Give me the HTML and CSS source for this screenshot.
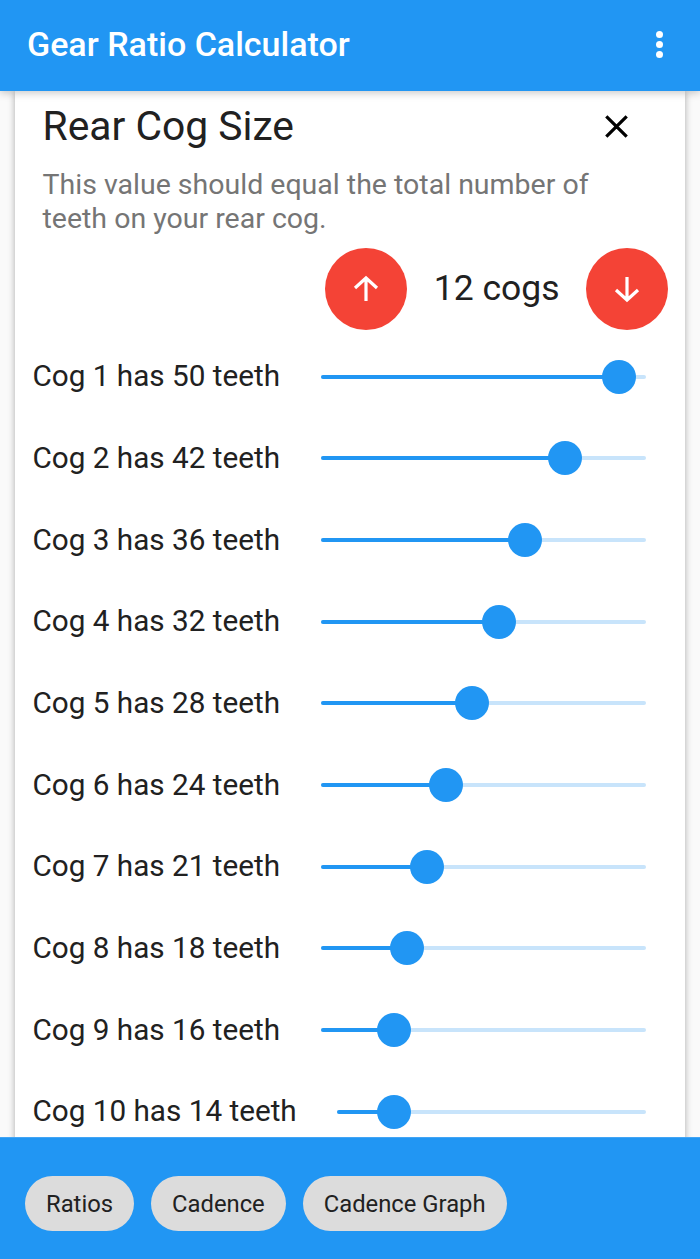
FILE: index.html
```html
<!DOCTYPE html>
<html lang="en">
<head>
    <meta charset="UTF-8">
    <title>Gear Ratio Calculator</title>
    <link rel="stylesheet" href="styles.css">
</head>
<body>
    <!-- App bar -->
    <header class="app-bar">
        <h1 class="app-title">Gear Ratio Calculator</h1>
        <div class="menu-dots"><span></span><span></span><span></span></div>
    </header>

    <main class="content">
        <section class="card">
            <div class="card-head">
                <h2 class="card-title">Rear Cog Size</h2>
                <svg class="close-icon" viewBox="0 0 24 24"><path d="M5 5 L19 19 M19 5 L5 19"/></svg>
            </div>
            <p class="card-desc">This value should equal the total number of teeth on your rear cog.</p>

            <div class="counter">
                <button class="round-btn">
                    <svg viewBox="0 0 28 28"><path d="M14 26 V3 M3 13 L14 3 L25 13"/></svg>
                </button>
                <span class="counter-value">12 cogs</span>
                <button class="round-btn">
                    <svg viewBox="0 0 28 28"><path d="M14 2 V25 M3 15 L14 25 L25 15"/></svg>
                </button>
            </div>

            <!-- Cog sliders -->
            <div class="cog-list">
                <div class="cog-row">
                    <span class="cog-label">Cog 1 has 50 teeth</span>
                    <div class="slider"><div class="slider-fill" style="width: 91.7%"><span class="thumb"></span></div></div>
                </div>
                <div class="cog-row">
                    <span class="cog-label">Cog 2 has 42 teeth</span>
                    <div class="slider"><div class="slider-fill" style="width: 75.3%"><span class="thumb"></span></div></div>
                </div>
                <div class="cog-row">
                    <span class="cog-label">Cog 3 has 36 teeth</span>
                    <div class="slider"><div class="slider-fill" style="width: 63%"><span class="thumb"></span></div></div>
                </div>
                <div class="cog-row">
                    <span class="cog-label">Cog 4 has 32 teeth</span>
                    <div class="slider"><div class="slider-fill" style="width: 54.9%"><span class="thumb"></span></div></div>
                </div>
                <div class="cog-row">
                    <span class="cog-label">Cog 5 has 28 teeth</span>
                    <div class="slider"><div class="slider-fill" style="width: 46.7%"><span class="thumb"></span></div></div>
                </div>
                <div class="cog-row">
                    <span class="cog-label">Cog 6 has 24 teeth</span>
                    <div class="slider"><div class="slider-fill" style="width: 38.6%"><span class="thumb"></span></div></div>
                </div>
                <div class="cog-row">
                    <span class="cog-label">Cog 7 has 21 teeth</span>
                    <div class="slider"><div class="slider-fill" style="width: 32.7%"><span class="thumb"></span></div></div>
                </div>
                <div class="cog-row">
                    <span class="cog-label">Cog 8 has 18 teeth</span>
                    <div class="slider"><div class="slider-fill" style="width: 26.5%"><span class="thumb"></span></div></div>
                </div>
                <div class="cog-row">
                    <span class="cog-label">Cog 9 has 16 teeth</span>
                    <div class="slider"><div class="slider-fill" style="width: 22.5%"><span class="thumb"></span></div></div>
                </div>
                <div class="cog-row">
                    <span class="cog-label">Cog 10 has 14 teeth</span>
                    <div class="slider"><div class="slider-fill" style="width: 18.3%"><span class="thumb"></span></div></div>
                </div>
            </div>
        </section>
    </main>

    <!-- Bottom tabs -->
    <footer class="bottom-bar">
        <button class="chip">Ratios</button>
        <button class="chip">Cadence</button>
        <button class="chip">Cadence Graph</button>
    </footer>
</body>
</html>
```

FILE: styles.css
```css
/* General body styling */
html, body {
    height: 100%;
}

body {
    font-family: Roboto, "Liberation Sans", sans-serif;
    margin: 0;
    background-color: #fafafa;
    color: #212121;
    display: flex;
    flex-direction: column;
    height: 1259px;
    overflow: hidden;
}

/* App bar */
.app-bar {
    flex: 0 0 91px;
    box-sizing: border-box;
    display: flex;
    align-items: center;
    justify-content: space-between;
    padding: 0 37px 3px 27px;
    background-color: #2196f3;
    box-shadow: 0 2px 8px rgba(0, 0, 0, 0.22);
    position: relative;
    z-index: 2;
}

.app-title {
    margin: 0;
    font-size: 34px;
    font-weight: 500;
    color: #fff;
}

.menu-dots {
    display: flex;
    flex-direction: column;
    gap: 3px;
}

.menu-dots span {
    width: 7px;
    height: 7px;
    border-radius: 50%;
    background-color: #fff;
}

/* Card */
.content {
    flex: 1;
    min-height: 0;
    overflow: hidden;
    padding: 0 15px;
}

.card {
    background-color: #fff;
    box-shadow: 0 0 7px rgba(0, 0, 0, 0.32);
}

.card-head {
    display: flex;
    align-items: center;
    justify-content: space-between;
    height: 70px;
    padding: 0 51px 0 27.5px;
}

.card-title {
    margin: 0;
    font-size: 40.8px;
    font-weight: 400;
}

.close-icon {
    width: 35px;
    height: 35px;
    fill: none;
    stroke: #000;
    stroke-width: 2.2;
}

.card-desc {
    margin: 7px 60px 0 27.5px;
    font-size: 28.5px;
    line-height: 34px;
    color: #757575;
}

/* Counter */
.counter {
    display: flex;
    align-items: center;
    justify-content: flex-end;
    gap: 26.5px;
    margin-top: 12px;
    padding-right: 17px;
}

.round-btn {
    width: 82px;
    height: 82px;
    padding: 0;
    border: none;
    border-radius: 50%;
    background-color: #f44336;
    display: flex;
    align-items: center;
    justify-content: center;
}

.round-btn svg {
    width: 28px;
    height: 28px;
    fill: none;
    stroke: #fff;
    stroke-width: 3.2;
}

.counter-value {
    font-size: 35.5px;
    padding-bottom: 2px;
}

/* Cog rows */
.cog-list {
    padding-top: 6px;
}

.cog-row {
    display: flex;
    align-items: center;
    gap: 40.5px;
    height: 81.67px;
    padding: 0 39.5px 0 17.5px;
}

.cog-label {
    font-size: 29.7px;
    white-space: nowrap;
    padding-bottom: 2px;
}

.slider {
    flex: 1;
    height: 4px;
    border-radius: 2px;
    background-color: #c8e4fb;
}

.slider-fill {
    height: 100%;
    border-radius: 2px;
    background-color: #2196f3;
    position: relative;
}

.thumb {
    position: absolute;
    right: -17px;
    top: -15px;
    width: 34px;
    height: 34px;
    border-radius: 50%;
    background-color: #2196f3;
}

/* Bottom bar */
.bottom-bar {
    flex: 0 0 122px;
    box-sizing: border-box;
    display: flex;
    align-items: center;
    gap: 17px;
    padding: 10px 25px 0;
    background-color: #2196f3;
    border-top: 1px solid #42a5f5;
    position: relative;
    z-index: 2;
}

.chip {
    height: 55px;
    padding: 0 21px;
    border: none;
    border-radius: 28px;
    background-color: #dcdcdc;
    color: #212121;
    font-family: inherit;
    font-size: 23.8px;
}
```
